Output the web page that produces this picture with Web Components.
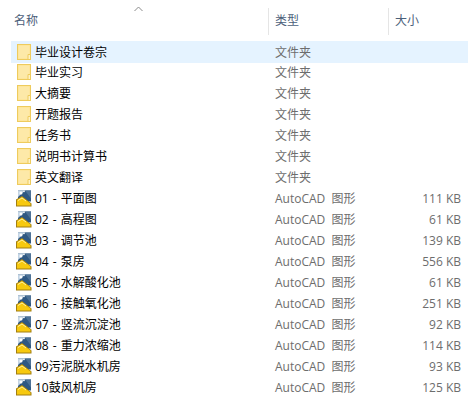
<!DOCTYPE html>
<html lang="zh"><head><meta charset="utf-8"><title>文件列表</title>
<style>
html,body{margin:0;padding:0;background:#fff;}
body{width:468px;height:402px;overflow:hidden;font:12px/21px "Open Sans","Noto Sans CJK SC",sans-serif;}
</style></head><body>
<file-list></file-list>
<template id="hd"><style>
:host{display:grid;grid-template-columns:268px 120px 1fr;height:41px;box-sizing:border-box;padding-top:8px;color:#4c607a;position:relative}
.c{height:27px;line-height:26px;box-sizing:border-box;padding-left:6px}
.c.a{padding-left:14px}
.c+.c{border-left:1px solid #e5e5e5}
svg{position:absolute;left:134px;top:6px}
</style><div class="c a">名称</div><div class="c">类型</div><div class="c">大小</div>
<svg width="9" height="6" viewBox="0 0 9 6"><path d="M.5 5 4.500 1l4 4" fill="none" stroke="#8a8a8a"/></svg></template>
<template id="rw"><style>
:host{display:grid;grid-template-columns:24px 240px 120px 1fr;margin-left:11px;height:21px;line-height:21px;color:#000;align-items:center;white-space:nowrap}
:host([selected]){background:#e5f3ff;height:22px;margin-bottom:-1px}
:host([cad]) .n{word-spacing:1px}
:host([cad]) .t{word-spacing:3px}
.i{display:flex;padding-left:5px;height:21px;align-items:center}
.t{color:#6d6d6d}.s{color:#6d6d6d;text-align:right;padding-right:7px}
</style><div class="i"><slot name="icon"></slot></div><div class="n"><slot></slot></div><div class="t"></div><div class="s"></div></template>
<script>
const folderSvg='<svg width="15" height="17" viewBox="0 0 15 17" style="margin-left:1px"><rect x=".5" y=".5" width="13" height="15" fill="#ffe38f" stroke="#eecb5d"/><rect x="1.500" y="1.500" width="11" height="13" fill="#fde9a8"/><path d="M11 15.500V10.500h2.500v5z" fill="#fff2c4" stroke="#eecb5d"/></svg>';
const cadSvg='<svg width="16" height="17" viewBox="0 0 16 17"><path d="M2 .5h13v11H2z" fill="#2f5882"/><path d="M2 .5h7L2 7z" fill="#c3d4e4"/><path d="M9 .5h6v8z" fill="#4d7297"/><circle cx="5" cy="3" r="1.500" fill="#fff"/><circle cx="8" cy="1.500" r=".8" fill="#fff"/><path d="M0 16.500V9.500l6-3.500 9.500 7.500V16.500z" fill="#a27f12"/><path d="M1 15.500V10l5-3 8.500 6.500V15.500z" fill="#f7c90f"/><path d="M2 10.500 6 8l4 3" fill="none" stroke="#fff0a0"/></svg>';
class FileHeader extends HTMLElement{constructor(){super();this.attachShadow({mode:'open'}).append(hd.content.cloneNode(true));}}
class FileRow extends HTMLElement{constructor(){super();this.attachShadow({mode:'open'}).append(rw.content.cloneNode(true));}
connectedCallback(){const r=this.shadowRoot;r.querySelector('.t').textContent=this.getAttribute('type');r.querySelector('.s').textContent=this.getAttribute('size')||'';}}
class FileList extends HTMLElement{constructor(){super();const s=this.attachShadow({mode:'open'});
s.innerHTML='<style>:host{display:block}</style><file-header></file-header>';
const F=['毕业设计卷宗','毕业实习','大摘要','开题报告','任务书','说明书计算书','英文翻译'];
const C=[['01 - 平面图','111 KB'],['02 - 高程图','61 KB'],['03 - 调节池','139 KB'],['04 - 泵房','556 KB'],['05 - 水解酸化池','61 KB'],['06 - 接触氧化池','251 KB'],['07 - 竖流沉淀池','92 KB'],['08 - 重力浓缩池','114 KB'],['09污泥脱水机房','93 KB'],['10鼓风机房','125 KB']];
const add=(n,ic,t,z,sel)=>{const e=document.createElement('file-row');e.setAttribute('type',t);if(z){e.setAttribute('size',z);e.setAttribute('cad','');}if(sel)e.setAttribute('selected','');
const w=document.createElement('span');w.slot='icon';w.style.cssText='display:flex';w.innerHTML=ic;e.append(w,n);s.append(e);};
F.forEach((n,i)=>add(n,folderSvg,'文件夹','',i==0));C.forEach(([n,z])=>add(n,cadSvg,'AutoCAD 图形',z));}}
customElements.define('file-header',FileHeader);customElements.define('file-row',FileRow);customElements.define('file-list',FileList);
</script></body></html>
